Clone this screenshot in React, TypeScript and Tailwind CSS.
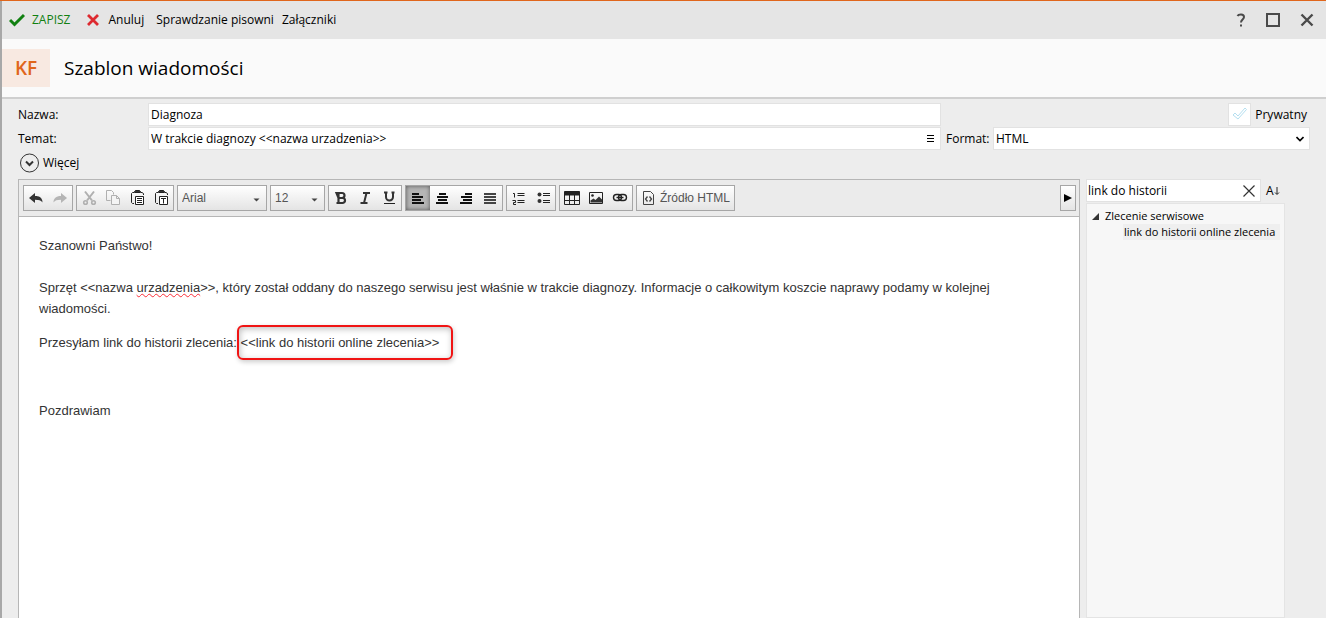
import { useState, type ReactNode } from 'react';

interface ToolButtonProps {
  label: string;
  active?: boolean;
  children: ReactNode;
}

function ToolGroup({ children }: { children: ReactNode }) {
  return (
    <div className="flex h-[26px] border border-[#a6a6a6] bg-gradient-to-b from-white to-[#e4e4e4]">
      {children}
    </div>
  );
}

function ToolButton({ label, active = false, children }: ToolButtonProps) {
  return (
    <button
      type="button"
      aria-label={label}
      title={label}
      className={`flex w-6 items-center justify-center ${active ? 'bg-[#b5b5b5] shadow-[inset_0_0_4px_#555]' : ''}`}
    >
      <svg width="16" height="16" viewBox="0 0 16 16" fill="none" stroke="#222">
        {children}
      </svg>
    </button>
  );
}

function ToolSelect({ label, value, width }: { label: string; value: string; width: string }) {
  return (
    <div className={`relative h-[26px] border border-[#a6a6a6] bg-gradient-to-b from-white to-[#e4e4e4] ${width}`}>
      <select
        aria-label={label}
        defaultValue={value}
        className="h-full w-full appearance-none pl-1 font-['Liberation_Sans',Arial,sans-serif] text-xs text-[#555]"
      >
        <option>{value}</option>
      </select>
      <svg className="pointer-events-none absolute top-[12px] right-1.5" width="7" height="4" viewBox="0 0 7 4">
        <path d="M0.5 0.5h6L3.5 3.5z" fill="#444" />
      </svg>
    </div>
  );
}

function AlignLines({ d, color = '#111' }: { d: string; color?: string }) {
  return <path d={d} stroke={color} strokeWidth="2" shapeRendering="crispEdges" />;
}

function Toolbar() {
  return (
    <div className="flex items-center gap-[3px] border-b border-[#b6b6b6] bg-[#ebebeb] py-[5px] pr-[3px] pl-1">
      <ToolGroup>
        <ToolButton label="Cofnij">
          <path d="M1 8l6-5v3c5 0 7.500 2.500 7.500 6.500C13 10.500 11 9.800 7 9.800V13z" fill="#333" stroke="none" />
        </ToolButton>
        <ToolButton label="Ponów">
          <path d="M15 8L9 3v3c-5 0-7.500 2.500-7.500 6.500C3 10.500 5 9.800 9 9.800V13z" fill="#b5b5b5" stroke="none" />
        </ToolButton>
      </ToolGroup>

      <ToolGroup>
        <ToolButton label="Wytnij">
          <g stroke="#b0b0b0" strokeWidth="2">
            <path d="M4 1.500L11 10.500M13 1.500L6 10.500" />
            <circle cx="4.500" cy="12.500" r="1.800" strokeWidth="1.600" />
            <circle cx="12.500" cy="12.500" r="1.800" strokeWidth="1.600" />
          </g>
        </ToolButton>
        <ToolButton label="Kopiuj">
          <g stroke="#b0b0b0">
            <path d="M5.500 10.500h-4v-10h5l2 2v2" />
            <path d="M6.500 5.500h5l3 3v6h-8zM11.500 5.500v3h3" fill="#f4f4f4" />
          </g>
        </ToolButton>
        <ToolButton label="Wklej">
          <path d="M5 13.500h-1.500l-1-1v-9l1-1h1.500M12 2.500h1l1.500 1v1.500" />
          <path d="M5.500 2.500h6v-1l-1-1h-4l-1 1z" fill="#333" />
          <path d="M6.500 6.500h8v8h-8z" fill="#fff" />
          <path d="M8 8.500h5M8 10.500h5M8 12.500h5" />
        </ToolButton>
        <ToolButton label="Wklej jako tekst">
          <path d="M5 13.500h-1.500l-1-1v-9l1-1h1.500M12 2.500h1l1.500 1v1.500" />
          <path d="M5.500 2.500h6v-1l-1-1h-4l-1 1z" fill="#333" />
          <path d="M6.500 6.500h8v8h-8z" fill="#fff" />
          <path d="M8 8.500h5M10.500 8.500v5" />
        </ToolButton>
      </ToolGroup>

      <ToolSelect label="Czcionka" value="Arial" width="w-[90px]" />
      <ToolSelect label="Rozmiar" value="12" width="w-[55px]" />

      <ToolGroup>
        <ToolButton label="Pogrubienie">
          <path
            d="M3.500 3h5.500a2.200 2.200 0 0 1 0 5h-3.500zM5.500 8h4a2.400 2.400 0 0 1 0 5H3.500M5.500 3v10"
            stroke="#333"
            strokeWidth="2.200"
          />
        </ToolButton>
        <ToolButton label="Kursywa">
          <path d="M6 3h7M3.500 13h7M9.500 3L7 13" stroke="#333" strokeWidth="2" />
        </ToolButton>
        <ToolButton label="Podkreślenie">
          <path d="M5 2v5a3.500 3.500 0 0 0 7 0V2M3 2.500h3.500M10.500 2.500h3" stroke="#333" strokeWidth="2" />
          <path d="M3 13.500h11" />
        </ToolButton>
      </ToolGroup>

      <ToolGroup>
        <ToolButton label="Wyrównaj do lewej" active>
          <AlignLines d="M2 4h7M2 7h11M2 10h9M2 13h12" />
        </ToolButton>
        <ToolButton label="Wyśrodkuj">
          <AlignLines d="M5 4h7M3 7h11M4 10h9M2 13h12" />
        </ToolButton>
        <ToolButton label="Wyrównaj do prawej">
          <AlignLines d="M7 4h7M3 7h11M5 10h9M2 13h12" />
        </ToolButton>
        <ToolButton label="Wyjustuj">
          <AlignLines d="M2 4h12M2 7h12M2 10h12M2 13h12" color="#444" />
        </ToolButton>
      </ToolGroup>

      <ToolGroup>
        <ToolButton label="Lista numerowana">
          <path d="M2 3.500h1.500v4M1.500 10.500h3v2h-2v2h2.500M6.500 3.500h7M6.500 5.500h7M6.500 10.500h7M6.500 12.500h7" />
        </ToolButton>
        <ToolButton label="Lista wypunktowana">
          <circle cx="4.500" cy="4.500" r="2" fill="#333" stroke="none" />
          <circle cx="4.500" cy="11" r="2" fill="#333" stroke="none" />
          <path d="M8 3.500h7M8 5.500h7M8 10.500h7M8 12.500h7" />
        </ToolButton>
      </ToolGroup>

      <ToolGroup>
        <ToolButton label="Tabela">
          <path d="M0.500 1.500h15v13h-15zM0.500 10.500h15M5.500 5v9.500M10.500 5v9.500" />
          <path d="M0.500 3.500h15" strokeWidth="4" />
        </ToolButton>
        <ToolButton label="Obrazek">
          <path d="M1.500 2.500h13v11h-13z" />
          <circle cx="4.500" cy="5.500" r="1.300" fill="#222" stroke="none" />
          <path d="M2.500 12.500v-2l3-2 2 1.500 3.500-3.500 3 3v3z" fill="#333" stroke="none" />
        </ToolButton>
        <ToolButton label="Odnośnik">
          <rect x="1.500" y="4.500" width="8" height="6" rx="3" strokeWidth="1.400" />
          <rect x="6.500" y="4.500" width="8" height="6" rx="3" strokeWidth="1.400" />
          <path d="M4.500 7.500h7" strokeWidth="1.400" />
        </ToolButton>
      </ToolGroup>

      <ToolGroup>
        <button
          type="button"
          className="flex items-center gap-1 px-1 font-['Liberation_Sans',Arial,sans-serif] text-xs text-[#555]"
        >
          <svg width="15" height="16" viewBox="0 0 15 16" fill="none" stroke="#444">
            <path d="M2.500 1.500h7l3 3v10h-10z" />
            <path d="M6.500 6.500L4.500 9l2 2.500M8.500 6.500l2 2.500-2 2.500" strokeWidth="1.300" />
          </svg>
          Źródło HTML
        </button>
      </ToolGroup>

      <button
        type="button"
        aria-label="Pokaż panel"
        className="ml-auto flex h-[26px] w-4 items-center justify-center border border-[#a6a6a6] bg-gradient-to-b from-white to-[#e4e4e4]"
      >
        <svg width="8" height="8" viewBox="0 0 8 8">
          <path d="M0 0l8 4-8 4z" fill="#000" />
        </svg>
      </button>
    </div>
  );
}

function Message() {
  return (
    <div
      role="textbox"
      aria-label="Treść wiadomości"
      className="space-y-[13px] px-5 py-[18px] font-['Liberation_Sans',Arial,sans-serif] text-[13px] leading-[21px] text-[#333]"
    >
      <p>
        Szanowni Państwo!
        <br />
        <br />
        Sprzęt &lt;&lt;nazwa{' '}
        <span className="underline decoration-red-500 decoration-wavy decoration-1">urzadzenia</span>
        &gt;&gt;, który został oddany do naszego serwisu jest właśnie w trakcie diagnozy. Informacje o całkowitym
        koszcie naprawy podamy w kolejnej wiadomości.
      </p>
      <p>
        Przesyłam link do historii zlecenia:{' '}
        <span className="relative">
          &lt;&lt;link do historii online zlecenia&gt;&gt;
          <span className="absolute -inset-y-[10px] -right-[14px] -left-1 rounded-md border-2 border-[#f01414] shadow-[1px_2px_5px_rgba(0,0,0,0.2),inset_1px_2px_6px_rgba(0,0,0,0.25)]" />
        </span>
      </p>
      <p>&nbsp;</p>
      <p>Pozdrawiam</p>
    </div>
  );
}

function VariablePanel() {
  const [query, setQuery] = useState('link do historii');

  return (
    <aside className="flex w-56 shrink-0 flex-col">
      <div className="flex items-center gap-[5px]">
        <div className="flex h-[23px] w-[175px] items-center border border-[#e2e2e2] bg-white">
          <input
            aria-label="Szukaj"
            value={query}
            onChange={(e) => setQuery(e.target.value)}
            className="w-0 grow pl-px outline-none"
          />
          <button type="button" aria-label="Wyczyść" onClick={() => setQuery('')} className="px-1">
            <svg width="14" height="14" viewBox="0 0 14 14" stroke="#333" strokeWidth="1.200">
              <path d="M1.500 1.500l11 11M12.500 1.500l-11 11" />
            </svg>
          </button>
        </div>
        <button type="button" aria-label="Sortuj" className="flex items-center">
          A
          <svg width="6" height="10" viewBox="0 0 6 10" fill="none" stroke="#222">
            <path d="M3 1v7M1 6.500l2 2 2-2" />
          </svg>
        </button>
      </div>
      <ul className="mt-px w-[199px] grow border border-[#e4e4e4] bg-[#f7f7f7] pt-1 text-[11px] leading-4">
        <li>
          <div className="flex items-center gap-1.5 pl-[5px]">
            <svg width="7" height="7" viewBox="0 0 7 7">
              <path d="M7 0v7H0z" fill="#333" />
            </svg>
            Zlecenie serwisowe
          </div>
          <ul className="pr-1 pl-9">
            <li className="bg-[#efefef] pl-px whitespace-nowrap">link do historii online zlecenia</li>
          </ul>
        </li>
      </ul>
    </aside>
  );
}

export default function App() {
  return (
    <div className="flex min-h-screen flex-col border-t border-[#e0661c] bg-[#ededed] font-['Open_Sans','Noto_Sans',sans-serif] text-xs text-black">
      <div className="flex grow flex-col border-l-2 border-[#a8a8a8]">
        {/* Command bar */}
        <header className="flex h-[38px] items-center bg-[#e5e5e5] pr-3 pl-[7px]">
          <button type="button" className="flex items-center gap-[7px] text-[#118011]">
            <svg width="16" height="14" viewBox="0 0 16 14" fill="none" stroke="#118011" strokeWidth="3">
              <path d="M1 7l4.500 4.500L15 2" />
            </svg>
            ZAPISZ
          </button>
          <button type="button" className="ml-4 flex items-center gap-2">
            <svg width="14" height="14" viewBox="0 0 14 14" stroke="#dd2a30" strokeWidth="2.800">
              <path d="M2 2l10 10M12 2L2 12" />
            </svg>
            Anuluj
          </button>
          <button type="button" className="ml-3">Sprawdzanie pisowni</button>
          <button type="button" className="ml-2">Załączniki</button>
          <div className="ml-auto flex items-center gap-5">
            <button type="button" aria-label="Pomoc">
              <svg width="10" height="14" viewBox="0 0 10 14" fill="none" stroke="#4a4a4a" strokeWidth="2">
                <path d="M1.500 3C2.500 1 8 .500 8 4c0 2.500-3 2.500-3 5.500M5 11.500v2" />
              </svg>
            </button>
            <button type="button" aria-label="Maksymalizuj" className="size-3.5 border-2 border-[#4a4a4a]" />
            <button type="button" aria-label="Zamknij">
              <svg width="14" height="14" viewBox="0 0 14 14" stroke="#4a4a4a" strokeWidth="2.400">
                <path d="M1.500 1.500l11 11M12.500 1.500l-11 11" />
              </svg>
            </button>
          </div>
        </header>

        {/* Title */}
        <div className="flex h-[60px] items-center gap-3.5 border-b-2 border-[#cfcfcf] bg-[#fafafa]">
          <div className="flex h-[38px] w-12 items-center justify-center bg-[#f8e9e1] text-[19px] leading-none font-semibold text-[#e0661c]">
            KF
          </div>
          <h1 className="text-[19px] leading-none">Szablon wiadomości</h1>
        </div>

        {/* Fields */}
        <div className="grid grid-cols-[130px_1fr_369px] items-center gap-y-px px-4 pt-1">
          <label htmlFor="name">Nazwa:</label>
          <input
            id="name"
            defaultValue="Diagnoza"
            className="h-[23px] border border-[#e2e2e2] bg-white px-0.5"
          />
          <label className="flex items-center justify-end gap-1 pr-[3px]">
            <span className="relative size-[23px]">
              <input type="checkbox" className="size-full appearance-none border border-[#e2e2e2] bg-white" />
              <svg
                className="pointer-events-none absolute inset-1"
                width="15"
                height="14"
                viewBox="0 0 15 14"
                fill="none"
                stroke="#b5dff0"
              >
                <path d="M1 8l2-2 3 3 7-8 1.500 1.500L6 12z" />
              </svg>
            </span>
            Prywatny
          </label>

          <label htmlFor="subject">Temat:</label>
          <div className="flex h-[23px] items-center border border-[#e2e2e2] bg-white">
            <input
              id="subject"
              defaultValue="W trakcie diagnozy <<nazwa urzadzenia>>"
              className="min-w-0 grow px-0.5"
            />
            <button type="button" aria-label="Wstaw pole" className="pr-1.5">
              <svg width="7" height="7" viewBox="0 0 7 7" stroke="#000">
                <path d="M0 .500h7M0 3.500h7M0 6.500h7" />
              </svg>
            </button>
          </div>
          <div className="flex items-center pl-[5px]">
            <label htmlFor="format" className="w-[47px]">Format:</label>
            <div className="relative grow">
              <select
                id="format"
                defaultValue="HTML"
                className="block h-[23px] w-full appearance-none border border-[#e2e2e2] bg-white px-0.5"
              >
                <option>HTML</option>
                <option>Tekst</option>
              </select>
              <svg
                className="pointer-events-none absolute top-[9px] right-1.5"
                width="8"
                height="6"
                viewBox="0 0 8 6"
                fill="none"
                stroke="#000"
                strokeWidth="1.600"
              >
                <path d="M.500 1L4 4.500 7.500 1" />
              </svg>
            </div>
          </div>
        </div>

        <button type="button" className="mt-[3px] ml-[18px] flex items-center gap-1 self-start">
          <svg width="19" height="20" viewBox="0 0 19 20" fill="none" stroke="#333">
            <circle cx="9.500" cy="10" r="9" />
            <path d="M6 8.500l3.500 3.500L13 8.500" strokeWidth="2" />
          </svg>
          Więcej
        </button>

        {/* Editor and variables */}
        <main className="mt-1.5 flex grow gap-1.5 px-4">
          <section className="min-w-0 grow border border-b-0 border-[#b6b6b6] bg-white">
            <Toolbar />
            <Message />
          </section>
          <VariablePanel />
        </main>
      </div>
    </div>
  );
}
